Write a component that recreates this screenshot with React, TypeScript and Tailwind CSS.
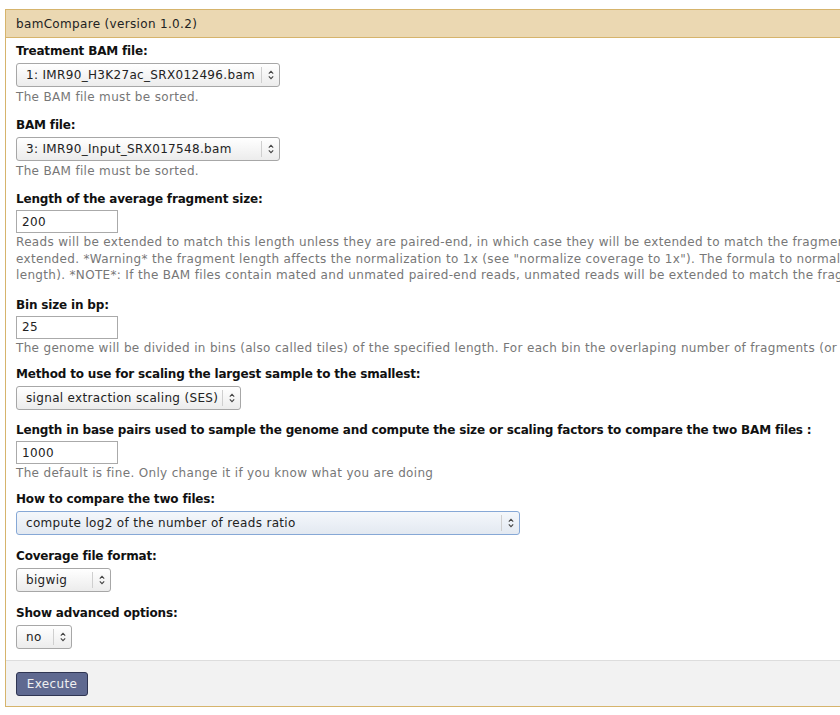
import React from "react";

const font = { fontFamily: '"DejaVu Sans", Verdana, sans-serif' };

const Arrows = () => (
  <svg width="8" height="12" viewBox="0 0 8 12" fill="none" stroke="#444" strokeWidth="1.1">
    <path d="M1.8 4.6 L4 2.4 L6.2 4.6" />
    <path d="M1.8 7.4 L4 9.6 L6.2 7.4" />
  </svg>
);

const Select = ({
  value,
  width,
  focused,
}: {
  value: string;
  width: string;
  focused?: boolean;
}) => (
  <div
    className={`flex h-[24px] items-stretch rounded-[3px] border ${width} ${
      focused
        ? "border-[#86a8d6] bg-gradient-to-b from-[#f4f7fb] to-[#e3e9f1]"
        : "border-[#a7a7a7] bg-gradient-to-b from-[#ffffff] to-[#ececec]"
    }`}
  >
    <div className="flex flex-1 items-center truncate pl-[9px] text-[12px] tracking-[0.33px] text-[#222]">
      {value}
    </div>
    <div className="my-[3px] w-px bg-[#cfcfcf]" />
    <div className="flex w-[17px] items-center justify-center">
      <Arrows />
    </div>
  </div>
);

const Input = ({ value }: { value: string }) => (
  <div className="flex h-[23px] w-[102px] items-center border border-[#aaaaaa] bg-white pl-[5px] text-[12px] tracking-[0.33px] text-[#222]">
    {value}
  </div>
);

// text-input rows sit a little tighter than select rows
const Row = ({
  label,
  help,
  input,
  pb,
  children,
}: {
  label: string;
  help?: React.ReactNode;
  input?: boolean;
  pb: string;
  children: React.ReactNode;
}) => (
  <div className={`px-[10px] ${pb}`}>
    <div
      className={`${
        input ? "mb-[3px]" : "mb-[4px]"
      } text-[12px] leading-[16px] font-bold tracking-[-0.17px] text-[#111] whitespace-nowrap`}
    >
      {label}
    </div>
    {children}
    {help && (
      <div
        className={`${
          input ? "mt-[1px] leading-[16.5px]" : "mt-[2px] leading-[16px]"
        } text-[12px] tracking-[0.33px] text-[#777] whitespace-nowrap`}
      >
        {help}
      </div>
    )}
  </div>
);

export default function App() {
  return (
    <div className="h-screen w-screen overflow-hidden bg-white pt-[9px] pl-[5px]" style={font}>
      <div className="w-[900px] border border-[#d6b46c] bg-white">
        <div className="flex h-[28px] items-center border-b border-[#d6b46c] bg-[#ebd8b2] px-[10px] text-[12px] tracking-[0.33px] text-[#222]">
          bamCompare (version 1.0.2)
        </div>
        <div className="pt-[5px]">
          <Row pb="pb-[12px]" label="Treatment BAM file:" help="The BAM file must be sorted.">
            <Select value="1: IMR90_H3K27ac_SRX012496.bam" width="w-[264px]" />
          </Row>
          <Row pb="pb-[12px]" label="BAM file:" help="The BAM file must be sorted.">
            <Select value="3: IMR90_Input_SRX017548.bam" width="w-[264px]" />
          </Row>
          <Row
            input
            pb="pb-[13px]"
            label="Length of the average fragment size:"
            help={
              <>
                Reads will be extended to match this length unless they are paired-end, in which case they will be extended to match the fragment length. If this value is set to the read length or smaller, the read will not be
                <br />
                extended. *Warning* the fragment length affects the normalization to 1x (see "normalize coverage to 1x"). The formula to normalize using the sequencing depth is genomeSize/(number of mapped reads * fragment
                <br />
                length). *NOTE*: If the BAM files contain mated and unmated paired-end reads, unmated reads will be extended to match the fragment length.
              </>
            }
          >
            <Input value="200" />
          </Row>
          <Row
            input
            pb="pb-[10px]"
            label="Bin size in bp:"
            help="The genome will be divided in bins (also called tiles) of the specified length. For each bin the overlaping number of fragments (or reads) is reported."
          >
            <Input value="25" />
          </Row>
          <Row pb="pb-[12px]" label="Method to use for scaling the largest sample to the smallest:">
            <Select value="signal extraction scaling (SES)" width="w-[225px]" />
          </Row>
          <Row
            input
            pb="pb-[9px]"
            label="Length in base pairs used to sample the genome and compute the size or scaling factors to compare the two BAM files :"
            help="The default is fine. Only change it if you know what you are doing"
          >
            <Input value="1000" />
          </Row>
          <Row pb="pb-[13px]" label="How to compare the two files:">
            <Select value="compute log2 of the number of reads ratio" width="w-[504px]" focused />
          </Row>
          <Row pb="pb-[13px]" label="Coverage file format:">
            <Select value="bigwig" width="w-[95px]" />
          </Row>
          <Row pb="pb-[11px]" label="Show advanced options:">
            <Select value="no" width="w-[56px]" />
          </Row>
        </div>
        <div className="border-t border-[#dddddd] bg-[#f2f2f2] px-[10px] pt-[10px] pb-[10px]">
          <button className="h-[24px] w-[72px] rounded-[3px] border border-[#2f3552] bg-[#5f6990] text-[12px] tracking-[0.33px] text-[#f0f0f0]">
            Execute
          </button>
        </div>
      </div>
    </div>
  );
}
